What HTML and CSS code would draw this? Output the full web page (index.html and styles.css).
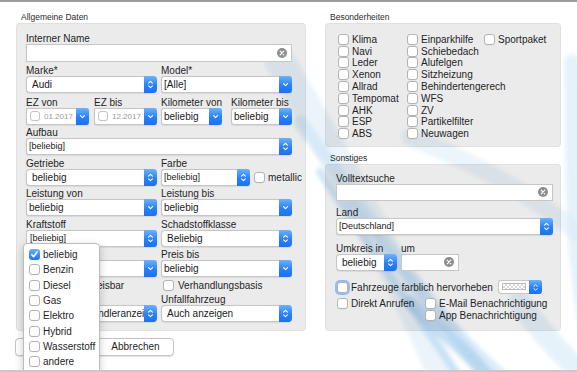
FILE: index.html
```html
<!DOCTYPE html>
<html lang="de">
<head>
<meta charset="utf-8">
<title>Suche</title>
<link rel="stylesheet" href="styles.css">
</head>
<body>
<div class="window">
  <svg class="backdrop" width="577" height="372" viewBox="0 0 577 372" aria-hidden="true">
    <defs>
      <symbol id="stepper" viewBox="0 0 13 17"><path d="M4.6 7.2 L6.5 5.3 L8.4 7.2 M4.6 9.8 L6.5 11.7 L8.4 9.8" fill="none" stroke="#fff" stroke-width="1.1" stroke-linecap="round" stroke-linejoin="round"/></symbol>
      <symbol id="chevron" viewBox="0 0 13 17"><path d="M4.5 7.6 L6.5 9.6 L8.5 7.6" fill="none" stroke="#fff" stroke-width="1.2" stroke-linecap="round" stroke-linejoin="round"/></symbol>
      <symbol id="clear" viewBox="0 0 10 10"><circle cx="5" cy="5" r="5" fill="#8d8d8d"/><path d="M3.2 3.2 L6.8 6.8 M6.8 3.2 L3.2 6.8" stroke="#fff" stroke-width="1.2" stroke-linecap="round"/></symbol>
      <symbol id="check" viewBox="0 0 11 11"><path d="M2.8 5.8 L4.6 7.8 L8.2 2.8" fill="none" stroke="#fff" stroke-width="1.5" stroke-linecap="round" stroke-linejoin="round"/></symbol>
      <filter id="soft"><feGaussianBlur stdDeviation="2"/></filter>
    </defs>
    <g fill="none" stroke-linecap="round" filter="url(#soft)">
      <path d="M280 60 C 340 160, 390 250, 450 390" stroke="#e2eff9" stroke-width="30" opacity=".7"/>
      <path d="M300 120 C 360 200, 410 280, 500 390" stroke="#cde3f5" stroke-width="14" opacity=".65"/>
      <path d="M320 170 C 370 245, 420 320, 470 390" stroke="#add1ef" stroke-width="8" opacity=".55"/>
      <path d="M350 200 C 400 265, 440 320, 520 390" stroke="#bddaf2" stroke-width="11" opacity=".55"/>
      <path d="M410 300 C 440 330, 470 350, 500 390" stroke="#93c4ec" stroke-width="13" opacity=".5"/>
      <path d="M410 135 C 475 160, 540 195, 600 250" stroke="#e0eef9" stroke-width="18" opacity=".6"/>
      <path d="M572 60 C 575 150, 566 250, 600 390" stroke="#d6e9f7" stroke-width="16" opacity=".6"/>
      <path d="M520 300 C 540 330, 560 350, 590 380" stroke="#d2e7f6" stroke-width="22" opacity=".55"/>
    </g>
  </svg>

  <div class="columns">
    <section class="col col-left">
      <h2 class="group-title">Allgemeine Daten</h2>
      <div class="panel panel-main">
        <div class="field">
          <label class="lbl">Interner Name</label>
          <div class="textfield"><svg class="clear" width="10" height="10"><use href="#clear"/></svg></div>
        </div>

        <div class="row2">
          <div class="field">
            <label class="lbl">Marke*</label>
            <div class="popup round"><span class="val">Audi</span><span class="btn"><svg width="13" height="17"><use href="#stepper"/></svg></span></div>
          </div>
          <div class="field">
            <label class="lbl">Model*</label>
            <div class="popup"><span class="val">[Alle]</span><span class="btn"><svg width="13" height="17"><use href="#chevron"/></svg></span></div>
          </div>
        </div>

        <div class="row2 row-ez">
          <div class="half-ez">
            <div class="field">
              <label class="lbl">EZ von</label>
              <div class="popup datefield"><span class="cb cb-small"></span><span class="date">01.2017</span><span class="btn"><svg width="13" height="17"><use href="#chevron"/></svg></span></div>
            </div>
            <div class="field">
              <label class="lbl">EZ bis</label>
              <div class="popup datefield"><span class="cb cb-small"></span><span class="date">12.2017</span><span class="btn"><svg width="13" height="17"><use href="#chevron"/></svg></span></div>
            </div>
          </div>
          <div class="half-km">
            <div class="field">
              <label class="lbl">Kilometer von</label>
              <div class="popup"><span class="val">beliebig</span><span class="btn"><svg width="13" height="17"><use href="#chevron"/></svg></span></div>
            </div>
            <div class="field">
              <label class="lbl">Kilometer bis</label>
              <div class="popup"><span class="val">beliebig</span><span class="btn"><svg width="13" height="17"><use href="#chevron"/></svg></span></div>
            </div>
          </div>
        </div>

        <div class="field">
          <label class="lbl">Aufbau</label>
          <div class="popup"><span class="val small">[beliebig]</span><span class="btn"><svg width="13" height="17"><use href="#stepper"/></svg></span></div>
        </div>

        <div class="row2">
          <div class="field">
            <label class="lbl">Getriebe</label>
            <div class="popup round"><span class="val">beliebig</span><span class="btn"><svg width="13" height="17"><use href="#stepper"/></svg></span></div>
          </div>
          <div class="field">
            <label class="lbl">Farbe</label>
            <div class="farbe-line">
              <div class="popup farbe"><span class="val small">[beliebig]</span><span class="btn"><svg width="13" height="17"><use href="#stepper"/></svg></span></div>
              <span class="cb cb-metallic"></span><span class="cb-text">metallic</span>
            </div>
          </div>
        </div>

        <div class="row2">
          <div class="field">
            <label class="lbl">Leistung von</label>
            <div class="popup"><span class="val">beliebig</span><span class="btn"><svg width="13" height="17"><use href="#chevron"/></svg></span></div>
          </div>
          <div class="field">
            <label class="lbl">Leistung bis</label>
            <div class="popup"><span class="val">beliebig</span><span class="btn"><svg width="13" height="17"><use href="#chevron"/></svg></span></div>
          </div>
        </div>

        <div class="row2">
          <div class="field">
            <label class="lbl">Kraftstoff</label>
            <div class="popup"><span class="val small indent">[beliebig]</span><span class="btn"><svg width="13" height="17"><use href="#stepper"/></svg></span></div>
          </div>
          <div class="field">
            <label class="lbl">Schadstoffklasse</label>
            <div class="popup round"><span class="val">Beliebig</span><span class="btn"><svg width="13" height="17"><use href="#stepper"/></svg></span></div>
          </div>
        </div>

        <div class="row2">
          <div class="field">
            <label class="lbl">Preis von</label>
            <div class="popup"><span class="val">beliebig</span><span class="btn"><svg width="13" height="17"><use href="#chevron"/></svg></span></div>
          </div>
          <div class="field">
            <label class="lbl">Preis bis</label>
            <div class="popup"><span class="val">beliebig</span><span class="btn"><svg width="13" height="17"><use href="#chevron"/></svg></span></div>
          </div>
        </div>

        <div class="row2 row-check">
          <div class="chk chk-left"><span class="cb"></span><span>MwSt. ausweisbar</span></div>
          <div class="chk chk-right"><span class="cb"></span><span>Verhandlungsbasis</span></div>
        </div>

        <div class="row2 row-unfall">
          <div class="field">
            <label class="lbl">Anbieter</label>
            <div class="popup round"><span class="val">Private und Händleranzeigen</span><span class="btn"><svg width="13" height="17"><use href="#stepper"/></svg></span></div>
          </div>
          <div class="field">
            <label class="lbl">Unfallfahrzeug</label>
            <div class="popup round"><span class="val">Auch anzeigen</span><span class="btn"><svg width="13" height="17"><use href="#stepper"/></svg></span></div>
          </div>
        </div>
      </div>

      <div class="buttons">
        <div class="button">Suchen</div>
        <div class="button">Abbrechen</div>
      </div>
    </section>

    <section class="col col-right">
      <h2 class="group-title">Besonderheiten</h2>
      <div class="panel panel-features">
        <div class="chk"><span class="cb"></span><span>Klima</span></div>
        <div class="chk"><span class="cb"></span><span>Navi</span></div>
        <div class="chk"><span class="cb"></span><span>Leder</span></div>
        <div class="chk"><span class="cb"></span><span>Xenon</span></div>
        <div class="chk"><span class="cb"></span><span>Allrad</span></div>
        <div class="chk"><span class="cb"></span><span>Tempomat</span></div>
        <div class="chk"><span class="cb"></span><span>AHK</span></div>
        <div class="chk"><span class="cb"></span><span>ESP</span></div>
        <div class="chk"><span class="cb"></span><span>ABS</span></div>
        <div class="chk"><span class="cb"></span><span>Einparkhilfe</span></div>
        <div class="chk"><span class="cb"></span><span>Schiebedach</span></div>
        <div class="chk"><span class="cb"></span><span>Alufelgen</span></div>
        <div class="chk"><span class="cb"></span><span>Sitzheizung</span></div>
        <div class="chk"><span class="cb"></span><span>Behindertengerech</span></div>
        <div class="chk"><span class="cb"></span><span>WFS</span></div>
        <div class="chk"><span class="cb"></span><span>ZV</span></div>
        <div class="chk"><span class="cb"></span><span>Partikelfilter</span></div>
        <div class="chk"><span class="cb"></span><span>Neuwagen</span></div>
        <div class="chk"><span class="cb"></span><span>Sportpaket</span></div>
      </div>

      <h2 class="group-title second">Sonstiges</h2>
      <div class="panel panel-other">
        <div class="field">
          <label class="lbl">Volltextsuche</label>
          <div class="textfield tf17"><svg class="clear" width="10" height="10"><use href="#clear"/></svg></div>
        </div>
        <div class="field land">
          <label class="lbl">Land</label>
          <div class="popup"><span class="val small">[Deutschland]</span><span class="btn"><svg width="13" height="17"><use href="#stepper"/></svg></span></div>
        </div>
        <div class="umkreis">
          <div class="field f-umkreis">
            <label class="lbl">Umkreis in</label>
            <div class="popup round"><span class="val">beliebig</span><span class="btn"><svg width="13" height="17"><use href="#stepper"/></svg></span></div>
          </div>
          <div class="field f-um">
            <label class="lbl">um</label>
            <div class="textfield tf17"><svg class="clear" width="10" height="10"><use href="#clear"/></svg></div>
          </div>
        </div>
        <div class="farb-row">
          <span class="cb focus"></span><span class="cb-text">Fahrzeuge farblich hervorheben</span>
          <div class="colorwell"><span class="swatch"></span><span class="btn"><svg width="13" height="15"><use href="#stepper"/></svg></span></div>
        </div>
        <div class="notify">
          <div class="chk"><span class="cb"></span><span>Direkt Anrufen</span></div>
          <div class="chk"><span class="cb"></span><span>E-Mail Benachrichtigung</span></div>
          <div class="chk chk-app"><span class="cb"></span><span>App Benachrichtigung</span></div>
        </div>
      </div>
    </section>
  </div>

  <div class="menu">
    <div class="mi"><span class="cb checked"><svg width="11" height="11"><use href="#check"/></svg></span><span>beliebig</span></div>
    <div class="mi"><span class="cb"></span><span>Benzin</span></div>
    <div class="mi"><span class="cb"></span><span>Diesel</span></div>
    <div class="mi"><span class="cb"></span><span>Gas</span></div>
    <div class="mi"><span class="cb"></span><span>Elektro</span></div>
    <div class="mi"><span class="cb"></span><span>Hybrid</span></div>
    <div class="mi"><span class="cb"></span><span>Wasserstoff</span></div>
    <div class="mi"><span class="cb"></span><span>andere</span></div>
  </div>
</div>
</body>
</html>
```

FILE: styles.css
```css
* { box-sizing: border-box; }

html, body { margin: 0; padding: 0; }

body {
  width: 577px;
  height: 372px;
  overflow: hidden;
  background: #fff;
  font-family: "Liberation Sans", Arial, sans-serif;
  font-size: 10px;
  color: #1f1f1f;
}

.window {
  position: relative;
  width: 577px;
  height: 372px;
  border-top: 2px solid #9c9c9c;
  border-bottom: 2px solid #c9c9c9;
  overflow: hidden;
  background: #fff;
}

.backdrop {
  position: absolute;
  left: 0;
  top: 0;
  z-index: 0;
}

.columns {
  position: relative;
  z-index: 1;
  display: flex;
  gap: 19px;
  padding-left: 16px;
}

.col-left { width: 290px; }
.col-right { width: 236px; }

.group-title {
  margin: 0;
  font-weight: normal;
  font-size: 8.5px;
  line-height: 10px;
  padding: 10px 0 1px 5px;
  color: #2b2b2b;
}
.group-title.second { padding-top: 6.5px; }

.panel {
  background: rgba(0, 0, 0, 0.08);
  border: 1px solid rgba(0, 0, 0, 0.05);
  border-radius: 4px;
}

.panel-main {
  padding: 10px 13px 8px 9px;
  display: flex;
  flex-direction: column;
  gap: 3.5px;
}

.field { display: flex; flex-direction: column; }

.lbl {
  display: block;
  height: 10px;
  line-height: 10px;
  white-space: nowrap;
  color: #1f1f1f;
}

.row2 {
  display: grid;
  grid-template-columns: 131px 131px;
  column-gap: 4px;
}

.row-ez { margin-top: 1.5px; }
.half-ez { display: grid; grid-template-columns: 63px 63px; column-gap: 5px; }
.half-km { display: grid; grid-template-columns: 61px 61px; column-gap: 9px; }

.textfield {
  height: 18px;
  background: #fff;
  border: 1px solid #c6c6c6;
  display: flex;
  align-items: center;
  justify-content: flex-end;
  padding-right: 4px;
}
.textfield.tf17 { height: 17px; }
.clear { display: block; }

.popup {
  height: 17px;
  display: flex;
  background: #fff;
  border: 1px solid #c6c6c6;
  border-right: none;
  border-radius: 3px;
  box-shadow: 0 0.5px 1px rgba(0, 0, 0, 0.08);
}
.popup .val {
  flex: 1;
  min-width: 0;
  padding-left: 2px;
  line-height: 15px;
  white-space: nowrap;
  overflow: hidden;
  color: #1a1a1a;
}
.popup.round { border-radius: 4px; }
.popup.round .val { padding-left: 5px; }
.popup .val.small { font-size: 9px; }
.popup .val.indent { padding-left: 3px; }

.btn {
  flex: none;
  width: 13px;
  margin: -1px 0 -1px 0;
  background: linear-gradient(#6cb3fd, #2a80f6 55%, #1a72f2);
  border-radius: 0 3px 3px 0;
  display: flex;
  align-items: center;
  justify-content: center;
}
.btn svg { display: block; }
.popup.round .btn { border-radius: 0 4px 4px 0; }

.datefield { border-radius: 2px; align-items: center; }
.datefield .btn { align-self: stretch; }
.datefield .date {
  flex: 1;
  font-size: 8px;
  color: #9a9a9a;
  margin-left: 4px;
  white-space: nowrap;
  overflow: hidden;
}

.cb {
  flex: none;
  display: inline-block;
  width: 11px;
  height: 11px;
  background: #fff;
  border: 1px solid #b3b3b3;
  border-radius: 3px;
  box-shadow: 0 0.5px 0.5px rgba(0, 0, 0, 0.06);
}
.cb-small { width: 10px; height: 10px; margin-left: 3px; border-color: #c4c4c4; }
.cb.checked {
  border: none;
  background: linear-gradient(#68b0fc, #1c75f3);
}
.cb.checked svg { display: block; }
.cb.focus { box-shadow: 0 0 0 2px rgba(80, 150, 245, 0.55); }

.farbe-line { display: flex; align-items: center; }
.popup.farbe { width: 89px; flex: none; }
.cb-metallic { margin-left: 4px; }
.cb-text { margin-left: 3px; white-space: nowrap; }

.chk {
  display: flex;
  align-items: center;
  gap: 3px;
  white-space: nowrap;
  height: 11.8px;
}

.row-check { margin-top: -1.5px; height: 12px; }
.chk-left { padding-left: 3px; height: 12px; }
.chk-right { padding-left: 2px; gap: 4px; height: 12px; }
.row-unfall { margin-top: 0; }

.buttons {
  display: flex;
  gap: 5px;
  margin: 7px 0 0 -1px;
}
.button {
  width: 77px;
  height: 18px;
  border: 1px solid #c4c4c4;
  border-radius: 4px;
  background: #fff;
  text-align: center;
  line-height: 16px;
  color: #1f1f1f;
  box-shadow: 0 0.5px 1px rgba(0, 0, 0, 0.1);
}

.panel-features {
  padding: 9.5px 4px 6.3px 12px;
  display: grid;
  grid-template-columns: 69px 77px auto;
  grid-template-rows: repeat(9, 11.8px);
  grid-auto-flow: column;
}

.panel-other {
  padding: 8.4px 7px 9px 10px;
  display: flex;
  flex-direction: column;
}
.land { margin-top: 7.6px; }
.umkreis { display: flex; gap: 4px; margin-top: 8.5px; }
.f-umkreis { width: 61px; }
.f-um { width: 58px; }

.farb-row {
  display: flex;
  align-items: center;
  height: 14.5px;
  margin-top: 9px;
  padding-left: 1px;
}
.colorwell {
  display: flex;
  height: 14.5px;
  margin-left: 5px;
  border: 1px solid #c6c6c6;
  border-right: none;
  border-radius: 3px;
  background: #fff;
}
.swatch {
  width: 24px;
  height: 7px;
  margin: 2.5px 3px 0 3px;
  border: 1px solid #b8b8b8;
  background-color: #fff;
  background-image:
    linear-gradient(45deg, #d9d9d9 25%, transparent 25%, transparent 75%, #d9d9d9 75%),
    linear-gradient(45deg, #d9d9d9 25%, transparent 25%, transparent 75%, #d9d9d9 75%);
  background-size: 4px 4px;
  background-position: 0 0, 2px 2px;
}
.colorwell .btn { width: 13px; }

.notify {
  display: grid;
  grid-template-columns: 88px auto;
  grid-template-rows: 11.8px 11.8px;
  margin-top: 3px;
  padding-left: 1px;
}
.chk-app { grid-column: 2; }

.menu {
  position: absolute;
  left: 23px;
  top: 241px;
  width: 77px;
  height: 132px;
  z-index: 5;
  background: #fff;
  border: 1px solid #bcbcbc;
  border-radius: 4px;
  box-shadow: 0 3px 8px rgba(0, 0, 0, 0.22);
  padding-top: 3px;
}
.mi {
  display: flex;
  align-items: center;
  gap: 3px;
  height: 15.3px;
  padding-left: 5px;
  white-space: nowrap;
}
```
